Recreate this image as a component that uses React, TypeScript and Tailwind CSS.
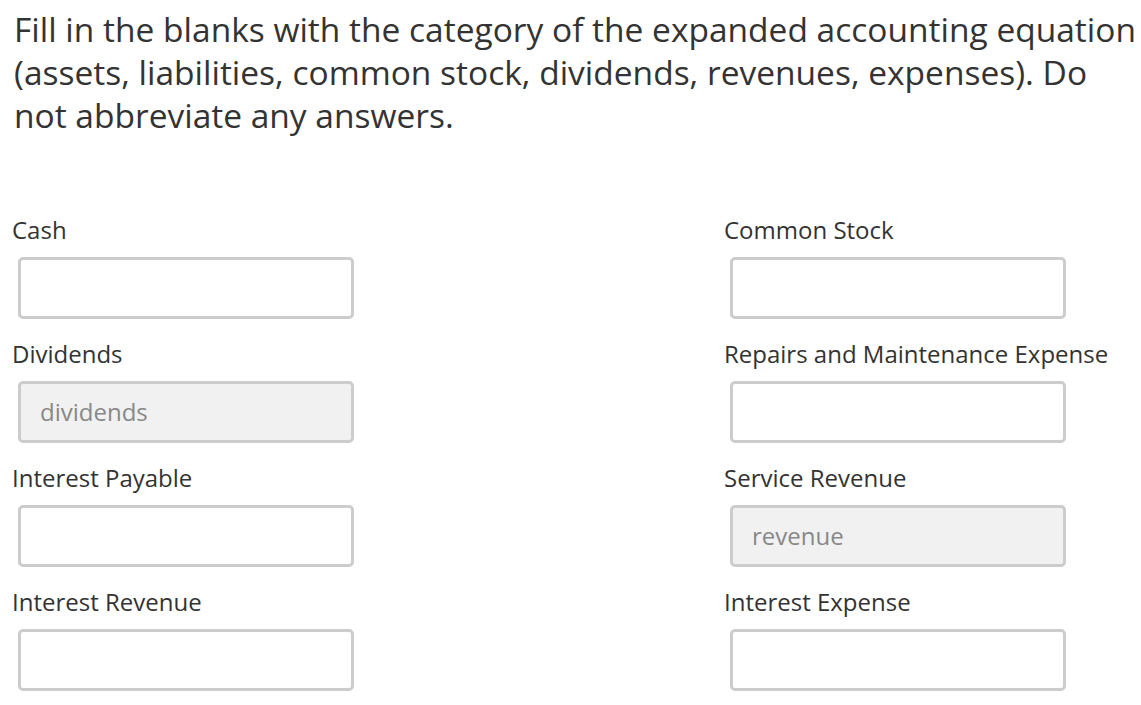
import React from 'react';

interface Field {
  label: string;
  value?: string;
}

const fields: Field[] = [
  { label: 'Cash' },
  { label: 'Common Stock' },
  { label: 'Dividends', value: 'dividends' },
  { label: 'Repairs and Maintenance Expense' },
  { label: 'Interest Payable' },
  { label: 'Service Revenue', value: 'revenue' },
  { label: 'Interest Revenue' },
  { label: 'Interest Expense' },
];

function BlankField({ field }: { field: Field }) {
  const filled = field.value !== undefined;
  return (
    <div className="flex flex-col">
      <label className="-ml-[1px] text-[24px] leading-[30px] text-[#333]">{field.label}</label>
      <div
        className={`ml-[5px] mt-[12px] h-[62px] w-[336px] rounded-[5px] border-[3px] border-[#cccccc] flex items-center px-[19px] text-[24px] ${
          filled ? 'bg-[#f1f1f1] text-[#888]' : 'bg-white'
        }`}
      >
        {field.value}
      </div>
    </div>
  );
}

export default function App() {
  return (
    <div
      className="min-h-[705px] bg-white pl-[14px] pt-[8px] text-[#333]"
      style={{ fontFamily: '"Open Sans", "Liberation Sans", sans-serif' }}
    >
      <p className="text-[33.5px] leading-[43px]">
        Fill in the blanks with the category of the expanded accounting equation (assets, liabilities, common stock,
        dividends, revenues, expenses). Do not abbreviate any answers.
      </p>
      <div className="mt-[78px] -ml-[1px] grid grid-cols-[712px_1fr] gap-y-[20px]">
        {fields.map((f) => (
          <BlankField key={f.label} field={f} />
        ))}
      </div>
    </div>
  );
}
